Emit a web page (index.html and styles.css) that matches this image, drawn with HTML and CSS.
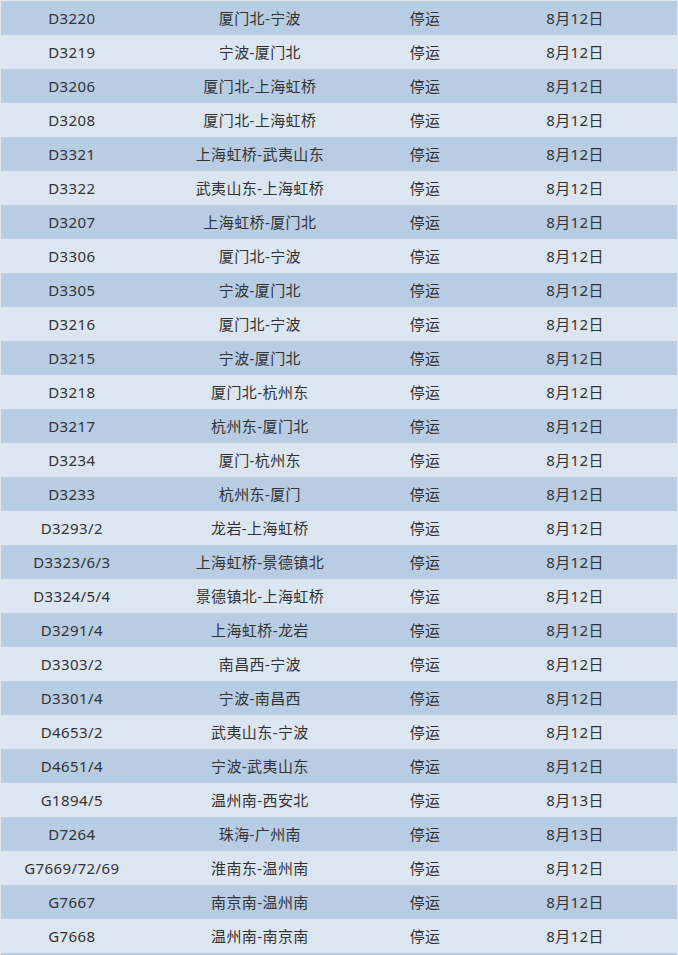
FILE: index.html
```html
<!DOCTYPE html>
<html lang="zh-CN">
<head>
<meta charset="utf-8">
<title>停运列车</title>
<link rel="stylesheet" href="styles.css">
</head>
<body>
<table class="trains">
<colgroup><col class="c1"><col class="c2"><col class="c3"><col class="c4"></colgroup>
<tbody>
<tr><td>D3220</td><td>厦门北-宁波</td><td>停运</td><td>8月12日</td></tr>
<tr><td>D3219</td><td>宁波-厦门北</td><td>停运</td><td>8月12日</td></tr>
<tr><td>D3206</td><td>厦门北-上海虹桥</td><td>停运</td><td>8月12日</td></tr>
<tr><td>D3208</td><td>厦门北-上海虹桥</td><td>停运</td><td>8月12日</td></tr>
<tr><td>D3321</td><td>上海虹桥-武夷山东</td><td>停运</td><td>8月12日</td></tr>
<tr><td>D3322</td><td>武夷山东-上海虹桥</td><td>停运</td><td>8月12日</td></tr>
<tr><td>D3207</td><td>上海虹桥-厦门北</td><td>停运</td><td>8月12日</td></tr>
<tr><td>D3306</td><td>厦门北-宁波</td><td>停运</td><td>8月12日</td></tr>
<tr><td>D3305</td><td>宁波-厦门北</td><td>停运</td><td>8月12日</td></tr>
<tr><td>D3216</td><td>厦门北-宁波</td><td>停运</td><td>8月12日</td></tr>
<tr><td>D3215</td><td>宁波-厦门北</td><td>停运</td><td>8月12日</td></tr>
<tr><td>D3218</td><td>厦门北-杭州东</td><td>停运</td><td>8月12日</td></tr>
<tr><td>D3217</td><td>杭州东-厦门北</td><td>停运</td><td>8月12日</td></tr>
<tr><td>D3234</td><td>厦门-杭州东</td><td>停运</td><td>8月12日</td></tr>
<tr><td>D3233</td><td>杭州东-厦门</td><td>停运</td><td>8月12日</td></tr>
<tr><td>D3293/2</td><td>龙岩-上海虹桥</td><td>停运</td><td>8月12日</td></tr>
<tr><td>D3323/6/3</td><td>上海虹桥-景德镇北</td><td>停运</td><td>8月12日</td></tr>
<tr><td>D3324/5/4</td><td>景德镇北-上海虹桥</td><td>停运</td><td>8月12日</td></tr>
<tr><td>D3291/4</td><td>上海虹桥-龙岩</td><td>停运</td><td>8月12日</td></tr>
<tr><td>D3303/2</td><td>南昌西-宁波</td><td>停运</td><td>8月12日</td></tr>
<tr><td>D3301/4</td><td>宁波-南昌西</td><td>停运</td><td>8月12日</td></tr>
<tr><td>D4653/2</td><td>武夷山东-宁波</td><td>停运</td><td>8月12日</td></tr>
<tr><td>D4651/4</td><td>宁波-武夷山东</td><td>停运</td><td>8月12日</td></tr>
<tr><td>G1894/5</td><td>温州南-西安北</td><td>停运</td><td>8月13日</td></tr>
<tr><td>D7264</td><td>珠海-广州南</td><td>停运</td><td>8月13日</td></tr>
<tr><td>G7669/72/69</td><td>淮南东-温州南</td><td>停运</td><td>8月12日</td></tr>
<tr><td>G7667</td><td>南京南-温州南</td><td>停运</td><td>8月12日</td></tr>
<tr><td>G7668</td><td>温州南-南京南</td><td>停运</td><td>8月12日</td></tr>
<tr><td>&nbsp;</td><td>&nbsp;</td><td>&nbsp;</td><td>&nbsp;</td></tr>
</tbody>
</table>
</body>
</html>
```
FILE: styles.css
```css
html, body {
  margin: 0;
  padding: 0;
  background: #ffffff;
}
.trains {
  border-collapse: collapse;
  width: 678px;
  table-layout: fixed;
  border: 1px solid #dfe6ee;
  font-family: "Noto Sans", "Noto Sans CJK SC", sans-serif;
  font-size: 15px;
  letter-spacing: 0.4px;
  color: #333333;
}
.c1 { width: 142px; }
.c2 { width: 234px; }
.c3 { width: 96px; }
.c4 { width: 204px; }
.trains td {
  height: 34px;
  padding: 0;
  text-align: center;
  vertical-align: middle;
  line-height: 34px;
  white-space: nowrap;
}
.trains tr:nth-child(odd) td { background: #b8cce4; }
.trains tr:nth-child(even) td { background: #dce6f1; }
```
